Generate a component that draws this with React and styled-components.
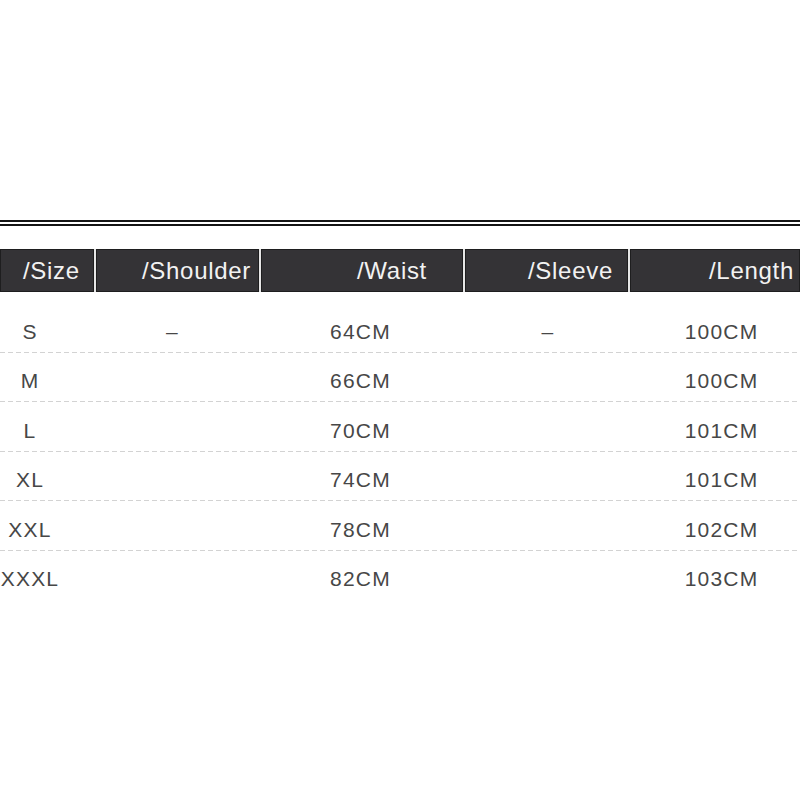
import React from "react";
import styled, { createGlobalStyle } from "styled-components";

const Global = createGlobalStyle`
  html, body { margin: 0; padding: 0; background: #ffffff; }
  body { font-family: "Liberation Sans", Arial, sans-serif; }
  * { box-sizing: border-box; }
`;

const Page = styled.div`
  width: 800px;
  height: 800px;
  padding-top: 220px;
  background: #ffffff;
  overflow: hidden;
`;

const DoubleRule = styled.div`
  height: 6px;
  border-top: 2px solid #141414;
  border-bottom: 2px solid #141414;
`;

const cols = "94px 163px 202px 163px 170px";

const HeaderRow = styled.div`
  display: grid;
  grid-template-columns: ${cols};
  column-gap: 2px;
  margin-top: 23px;
  height: 43px;
  background: #e6e6e6;
`;

const HeadCell = styled.div`
  display: flex;
  align-items: center;
  padding-left: ${(p) => p.$inset}px;
  background: #343336;
  border: 1px solid #1e1e1f;
  color: #f2f2f2;
  font-size: 24px;
  letter-spacing: 0.7px;
  white-space: nowrap;
  overflow: hidden;
`;

const Body = styled.div`
  margin-top: 11px;
`;

const Row = styled.div`
  display: grid;
  grid-template-columns: ${cols};
  column-gap: 2px;
  height: 49.5px;
  padding-top: 8px;
  align-items: center;
  background-image: repeating-linear-gradient(
    90deg,
    #d3d3d3 0 5px,
    transparent 5px 8px
  );
  background-size: 100% 1px;
  background-position: left bottom;
  background-repeat: no-repeat;

  &:last-child {
    background-image: none;
  }
`;

const Cell = styled.div`
  text-align: center;
  color: #474747;
  font-size: 21px;
  letter-spacing: 1.2px;
  white-space: nowrap;
  padding-left: ${(p) => (p.$shift > 0 ? p.$shift * 2 : 0)}px;
  padding-right: ${(p) => (p.$shift < 0 ? -p.$shift * 2 : 0)}px;
`;

const headers = [
  { label: "/Size", inset: 22 },
  { label: "/Shoulder", inset: 45 },
  { label: "/Waist", inset: 95 },
  { label: "/Sleeve", inset: 62 },
  { label: "/Length", inset: 78 },
];

const shifts = [-17, -5, -1.5, 1.5, 6.5];

const rows = [
  ["S", "–", "64CM", "–", "100CM"],
  ["M", "", "66CM", "", "100CM"],
  ["L", "", "70CM", "", "101CM"],
  ["XL", "", "74CM", "", "101CM"],
  ["XXL", "", "78CM", "", "102CM"],
  ["XXXL", "", "82CM", "", "103CM"],
];

export default function App() {
  return (
    <>
      <Global />
      <Page>
        <DoubleRule />
        <HeaderRow>
          {headers.map((h) => (
            <HeadCell key={h.label} $inset={h.inset}>
              {h.label}
            </HeadCell>
          ))}
        </HeaderRow>
        <Body>
          {rows.map((r) => (
            <Row key={r[0]}>
              {r.map((v, i) => (
                <Cell key={i} $shift={shifts[i]}>
                  {v}
                </Cell>
              ))}
            </Row>
          ))}
        </Body>
      </Page>
    </>
  );
}
